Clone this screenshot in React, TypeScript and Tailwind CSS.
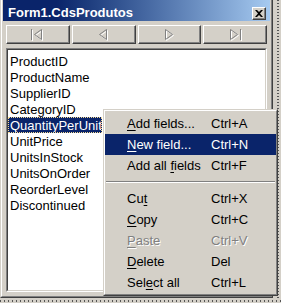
import React from "react";

type NavKind = "first" | "prior" | "next" | "last";

const FIELDS = [
  "ProductID",
  "ProductName",
  "SupplierID",
  "CategoryID",
  "QuantityPerUnit",
  "UnitPrice",
  "UnitsInStock",
  "UnitsOnOrder",
  "ReorderLevel",
  "Discontinued",
];

function NavShape({ kind }: { kind: NavKind }) {
  if (kind === "first")
    return (
      <>
        <path d="M1.5 1v11" />
        <path d="M11.5 1.5 4.5 6.5l7 5z" />
      </>
    );
  if (kind === "prior") return <path d="M10.5 1.5 3.5 6.5l7 5z" />;
  if (kind === "next") return <path d="M3.5 1.5 10.5 6.5l-7 5z" />;
  return (
    <>
      <path d="M2.5 1.5 9.5 6.5l-7 5z" />
      <path d="M12.5 1v11" />
    </>
  );
}

// disabled navigator glyph: grey stroke with white emboss
function NavButton({ kind }: { kind: NavKind }) {
  return (
    <div className="flex flex-1 items-center justify-center border border-t-white border-l-white border-r-[#404040] border-b-[#404040] bg-[#d4d0c8] shadow-[inset_-1px_-1px_0_#808080]">
      <svg width="15" height="14" viewBox="0 0 15 14" fill="none" strokeWidth="1">
        <g stroke="#ffffff" transform="translate(1 1)">
          <NavShape kind={kind} />
        </g>
        <g stroke="#808080">
          <NavShape kind={kind} />
        </g>
      </svg>
    </div>
  );
}

type MenuItem = {
  pre: string;
  key: string;
  post: string;
  shortcut: string;
  active?: boolean;
  disabled?: boolean;
};

const GROUP_A: MenuItem[] = [
  { pre: "", key: "A", post: "dd fields...", shortcut: "Ctrl+A" },
  { pre: "", key: "N", post: "ew field...", shortcut: "Ctrl+N", active: true },
  { pre: "Add all ", key: "f", post: "ields", shortcut: "Ctrl+F" },
];

const GROUP_B: MenuItem[] = [
  { pre: "Cu", key: "t", post: "", shortcut: "Ctrl+X" },
  { pre: "", key: "C", post: "opy", shortcut: "Ctrl+C" },
  { pre: "", key: "P", post: "aste", shortcut: "Ctrl+V", disabled: true },
  { pre: "", key: "D", post: "elete", shortcut: "Del" },
  { pre: "Sel", key: "e", post: "ct all", shortcut: "Ctrl+L" },
];

function MenuRow({ item }: { item: MenuItem }) {
  const tone = item.active
    ? "bg-[#0a246a] text-white"
    : item.disabled
      ? "text-[#808080] [text-shadow:1px_1px_0_#ffffff]"
      : "text-black";
  return (
    <div className={`grid h-[21px] grid-cols-[84px_1fr] items-center whitespace-nowrap pl-[22px] ${tone}`}>
      <span>
        {item.pre}
        <span className="underline underline-offset-[2px]">{item.key}</span>
        {item.post}
      </span>
      <span>{item.shortcut}</span>
    </div>
  );
}

export default function App() {
  return (
    <div className="relative flex h-[303px] w-[281px] flex-col overflow-hidden bg-[#d4d0c8] font-['Liberation_Sans',Arial,sans-serif] text-[13px] leading-none">
      <div className="flex h-[298px]">
        {/* fields editor window */}
        <div className="flex w-[273px] flex-col border-r border-b border-l border-r-[#404040] border-b-[#404040] border-l-[#d4d0c8]">
          <div className="flex flex-1 flex-col border-r border-b border-l border-r-[#808080] border-b-[#808080] border-l-white px-px pb-px">
            <div className="flex h-[21px] items-start justify-between bg-linear-to-r from-[#0a246a] from-20% to-[#a6caf0] pl-[5px]">
              <span className="pt-[5px] text-[13px] leading-[16px] font-bold text-white">Form1.CdsProdutos</span>
              <div className="mt-[7px] mr-[4px] flex h-[13px] w-[14px] items-center justify-center border border-t-white border-l-white border-r-[#404040] border-b-[#404040] bg-[#d4d0c8] shadow-[inset_-1px_-1px_0_#808080]">
                <svg width="8" height="7" viewBox="0 0 8 7">
                  <path d="M0 0h2l2 2 2-2h2L5 3.5 8 7H6L4 5 2 7H0l3-3.5z" fill="#000" />
                </svg>
              </div>
            </div>

            <div className="flex flex-1 flex-col gap-[4px] px-[3px] pt-[4px] pb-[3px]">
              <div className="flex h-[19px] gap-[2px]">
                <NavButton kind="first" />
                <NavButton kind="prior" />
                <NavButton kind="next" />
                <NavButton kind="last" />
              </div>

              <div className="flex flex-1 flex-col border border-t-[#808080] border-r-white border-b-white border-l-[#808080]">
                <div className="flex flex-1 flex-col border border-t-[#404040] border-r-[#d4d0c8] border-b-[#d4d0c8] border-l-[#404040] bg-white pt-[3px]">
                  {FIELDS.map((f) =>
                    f === "QuantityPerUnit" ? (
                      <div
                        key={f}
                        className="flex h-[16px] w-[94px] items-center overflow-hidden border border-dotted border-[#f5db95] bg-[#0a246a] pl-[1px] whitespace-nowrap text-white"
                      >
                        {f}
                      </div>
                    ) : (
                      <div key={f} className="flex h-[16px] items-center pl-[2px] whitespace-nowrap text-black">
                        {f}
                      </div>
                    )
                  )}
                </div>
              </div>
            </div>
          </div>
        </div>
        <div className="w-[4px]" />
        <div className="w-[2px] bg-[repeating-linear-gradient(to_bottom,#555555_0px,#555555_1px,transparent_1px,transparent_3px)]" />
      </div>
      <div className="mt-[2px] h-[2px] bg-[repeating-linear-gradient(to_right,#555555_0px,#555555_1px,transparent_1px,transparent_4px)]" />

      {/* context menu */}
      <div className="absolute top-[109px] left-[103px] h-[187px] w-[175px] border border-t-[#d4d0c8] border-r-[#404040] border-b-[#404040] border-l-[#d4d0c8]">
        <div className="flex h-full flex-col border border-t-white border-r-[#808080] border-b-[#808080] border-l-white bg-[#d4d0c8] pt-[2px]">
          {GROUP_A.map((m) => (
            <MenuRow key={m.shortcut} item={m} />
          ))}
          <div className="h-[12px] px-[1px] pt-[5px]">
            <div className="h-[2px] border-t border-b border-t-[#808080] border-b-white" />
          </div>
          {GROUP_B.map((m) => (
            <MenuRow key={m.shortcut} item={m} />
          ))}
        </div>
      </div>
    </div>
  );
}
